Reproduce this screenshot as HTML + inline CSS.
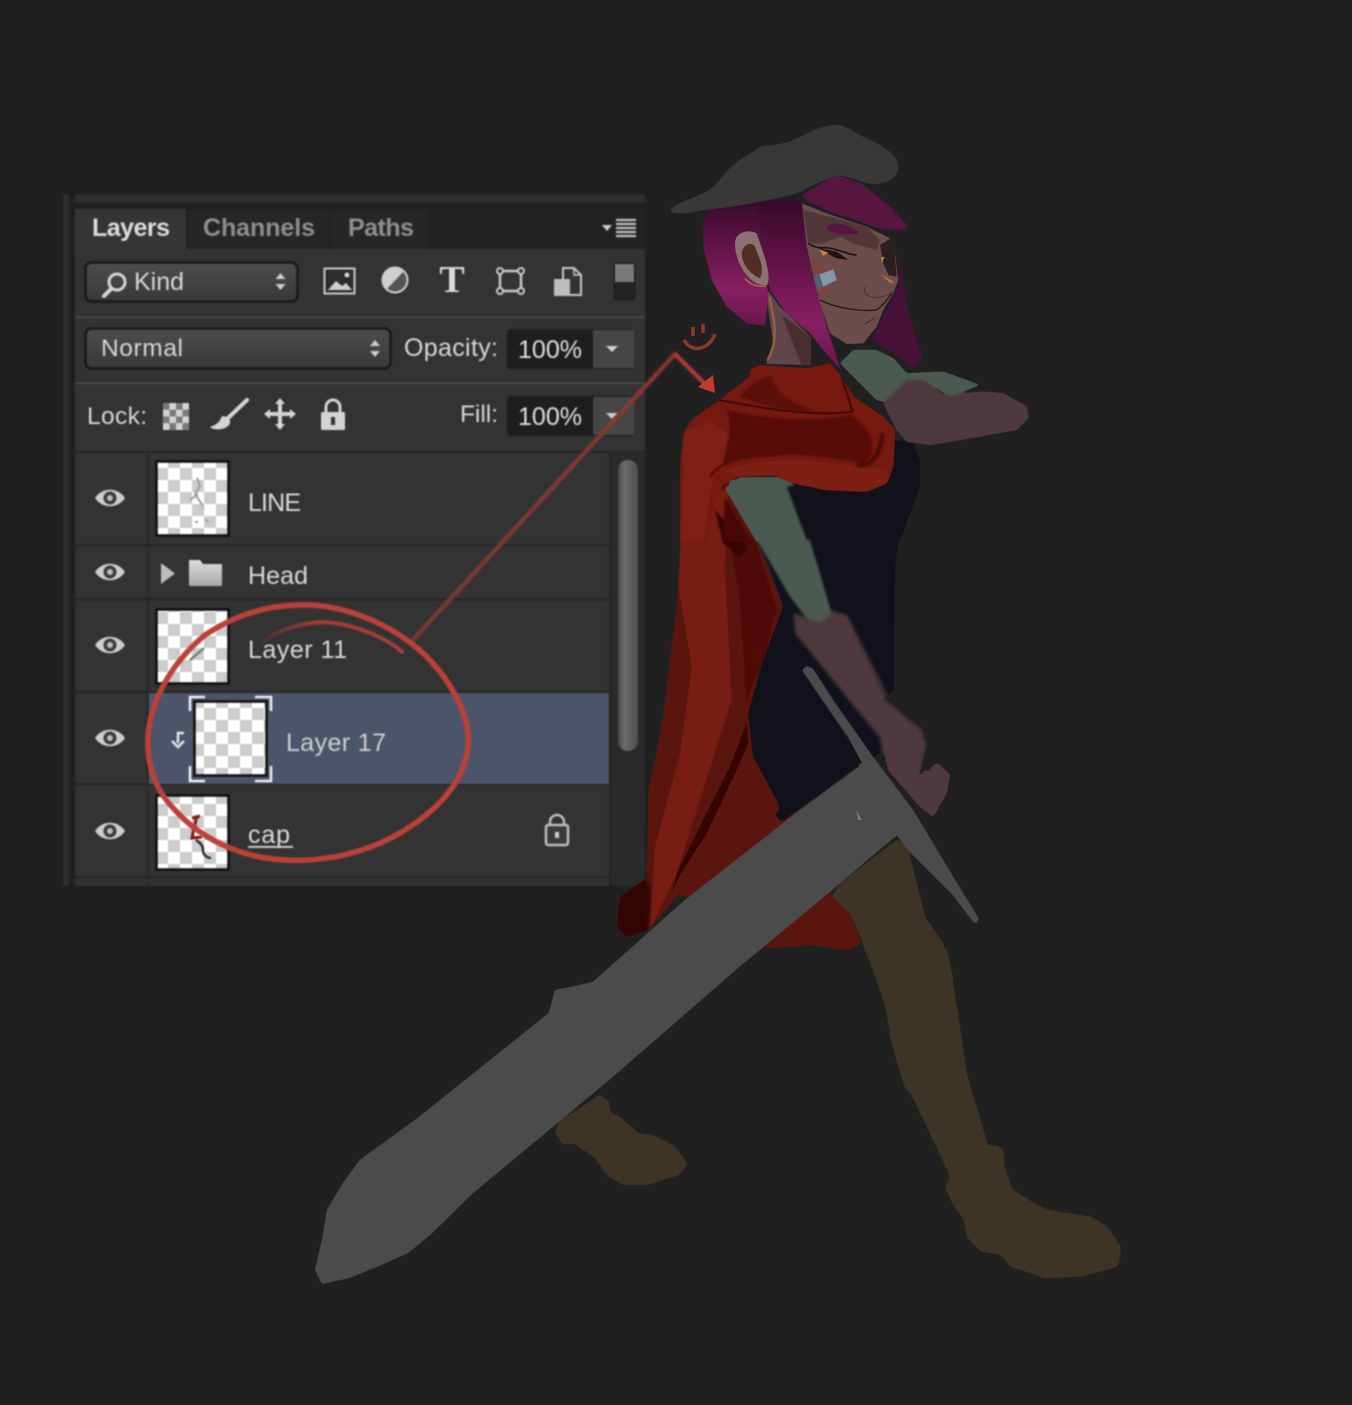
<!DOCTYPE html>
<html><head><meta charset="utf-8"><style>
html,body{margin:0;padding:0;background:#212020;width:1352px;height:1405px;overflow:hidden}
svg{display:block}
text{font-family:"Liberation Sans",sans-serif}
</style></head><body>
<svg width="1352" height="1405" viewBox="0 0 1352 1405" xmlns="http://www.w3.org/2000/svg">
<defs>
<pattern id="chk" width="24" height="24" patternUnits="userSpaceOnUse"><rect width="24" height="24" fill="#fff"/><rect width="12" height="12" fill="#ccc"/><rect x="12" y="12" width="12" height="12" fill="#ccc"/></pattern>
<linearGradient id="sel" x1="0" y1="0" x2="0" y2="1"><stop offset="0" stop-color="#4d4d4d"/><stop offset="1" stop-color="#383838"/></linearGradient>
<linearGradient id="sb" x1="0" y1="0" x2="1" y2="0"><stop offset="0" stop-color="#484848"/><stop offset=".3" stop-color="#6a6a6a"/><stop offset="1" stop-color="#505050"/></linearGradient>
<linearGradient id="hair" x1="0" y1="0" x2="0" y2="1"><stop offset="0" stop-color="#35092a"/><stop offset=".4" stop-color="#651349"/><stop offset=".72" stop-color="#861f62"/><stop offset="1" stop-color="#6a164c"/></linearGradient>
<linearGradient id="fo" x1="0" y1="0" x2="0" y2="1"><stop offset="0" stop-color="#dcdcdc"/><stop offset="1" stop-color="#a8a8a8"/></linearGradient>
<linearGradient id="line" gradientUnits="userSpaceOnUse" x1="410" y1="643" x2="675" y2="354"><stop offset="0" stop-color="#7e3a35"/><stop offset="1" stop-color="#93392f"/></linearGradient>
<linearGradient id="arc" gradientUnits="userSpaceOnUse" x1="262" y1="640" x2="402" y2="650"><stop offset="0" stop-color="#a83c34" stop-opacity=".15"/><stop offset=".4" stop-color="#a83c34"/><stop offset="1" stop-color="#a83c34"/></linearGradient>
<filter id="b" x="-2%" y="-2%" width="104%" height="104%" color-interpolation-filters="sRGB"><feGaussianBlur stdDeviation=".7"/></filter>
<filter id="b2" x="-20%" y="-20%" width="140%" height="140%" color-interpolation-filters="sRGB"><feGaussianBlur stdDeviation="3.500"/></filter>
<filter id="b3" x="-20%" y="-20%" width="140%" height="140%" color-interpolation-filters="sRGB"><feGaussianBlur stdDeviation="1.200"/></filter>
<filter id="s" x="-5%" y="-5%" width="110%" height="110%" color-interpolation-filters="sRGB"><feGaussianBlur stdDeviation="2.200"/><feComponentTransfer><feFuncA type="linear" slope="5" intercept="-2"/></feComponentTransfer></filter>
<filter id="s1" x="-5%" y="-5%" width="110%" height="110%" color-interpolation-filters="sRGB"><feGaussianBlur stdDeviation="1.200"/><feComponentTransfer><feFuncA type="linear" slope="4" intercept="-1.300"/></feComponentTransfer></filter>
</defs>
<rect width="1352" height="1405" fill="#212020"/>

<!-- PANEL -->
<g filter="url(#b)">
<rect x="63" y="194" width="6" height="692" fill="#2e2e2e"/>
<rect x="75" y="194" width="570" height="9" fill="#2f2f2f"/>
<rect x="75" y="208" width="570" height="678" fill="#333"/>
<rect x="75" y="208" width="570" height="41" fill="#222"/>
<rect x="75" y="209" width="111" height="41" fill="#353535"/>
<rect x="189" y="210" width="140" height="38" fill="#262626"/>
<rect x="332" y="210" width="96" height="38" fill="#262626"/>
<text x="92" y="236" font-size="25" font-weight="700" fill="#dcdcdc" textLength="78">Layers</text>
<text x="203" y="236" font-size="25" font-weight="700" fill="#8e8e8e" textLength="112">Channels</text>
<text x="348" y="236" font-size="25" font-weight="700" fill="#8e8e8e" textLength="66">Paths</text>
<path d="M602 225h10l-5 6z" fill="#cfcfcf"/>
<path d="M616 220h20M616 224h20M616 228h20M616 232h20M616 236h20" stroke="#c0c0c0" stroke-width="2.200"/>

<!-- row 1 -->
<rect x="85.500" y="262.500" width="212" height="39" rx="6" fill="url(#sel)" stroke="#191919" stroke-width="2.500"/>
<circle cx="117" cy="282" r="8" fill="none" stroke="#d5d5d5" stroke-width="3"/>
<path d="M111 289l-7 7" stroke="#d5d5d5" stroke-width="4" stroke-linecap="round"/>
<text x="134" y="290" font-size="25" fill="#d8d8d8" textLength="50">Kind</text>
<path d="M275.500 279l5-6 5 6zM275.500 284l5 6 5-6z" fill="#cdcdcd"/>
<rect x="324.500" y="268.500" width="30" height="25" fill="#2c2c2c" stroke="#c9c9c9" stroke-width="2"/>
<path d="M328 290l8-9 6 5 4-3 6 7z" fill="#cfcfcf"/><circle cx="347" cy="275" r="2.500" fill="#cfcfcf"/>
<circle cx="395" cy="280" r="13" fill="#cfcfcf"/><path d="M386 290a13 13 0 0 0 18-19z" fill="#555"/><circle cx="395" cy="280" r="12.500" fill="none" stroke="#cfcfcf" stroke-width="2"/>
<text x="452" y="292" text-anchor="middle" font-size="38" font-weight="700" fill="#dadada" style="font-family:'Liberation Serif',serif">T</text>
<rect x="500" y="271" width="21" height="20" fill="none" stroke="#c9c9c9" stroke-width="2.500"/>
<g fill="#333" stroke="#c9c9c9" stroke-width="2"><circle cx="500" cy="271" r="3"/><circle cx="521" cy="271" r="3"/><circle cx="500" cy="291" r="3"/><circle cx="521" cy="291" r="3"/></g>
<path d="M563 279v-11h11l7 7v20h-11" fill="none" stroke="#c9c9c9" stroke-width="2"/>
<path d="M574 268v7h7" fill="none" stroke="#c9c9c9" stroke-width="1.500"/>
<rect x="554" y="279" width="16" height="17" fill="#bdbdbd"/>
<rect x="614" y="263" width="21" height="37" rx="2" fill="#232323" stroke="#1d1d1d"/>
<rect x="615" y="264" width="19" height="18" fill="#7a7a7a"/>
<rect x="75" y="316" width="570" height="2" fill="#484848"/><rect x="75" y="315" width="570" height="1" fill="#292929"/>

<!-- row 2 -->
<rect x="85.500" y="328.500" width="305" height="40" rx="6" fill="url(#sel)" stroke="#191919" stroke-width="2.500"/>
<text x="101" y="356" font-size="24.500" fill="#d8d8d8" textLength="82">Normal</text>
<path d="M370 346l5-6 5 6zM370 351l5 6 5-6z" fill="#cdcdcd"/>
<text x="404" y="356" font-size="25" fill="#d8d8d8" textLength="94">Opacity:</text>
<rect x="507" y="329" width="127" height="40" rx="3" fill="#1e1e1e"/>
<rect x="593" y="330" width="41" height="38" rx="2" fill="#464646"/>
<text x="518" y="358" font-size="25" fill="#e0e0e0" textLength="64">100%</text>
<path d="M606 346h12l-6 6z" fill="#d0d0d0"/>
<rect x="75" y="382" width="570" height="2" fill="#484848"/><rect x="75" y="381" width="570" height="1" fill="#292929"/>

<!-- row 3 -->
<text x="87" y="424" font-size="24.500" fill="#d8d8d8" textLength="60">Lock:</text>
<rect x="163" y="403" width="26" height="27" fill="#d4d4d4"/>
<path d="M163 403h6.500v6.700h-6.500zM176 403h6.500v6.700h-6.500zM169.500 409.700h6.500v6.700h-6.500zM182.500 409.700h6.500v6.700h-6.500zM163 416.400h6.500v6.700h-6.500zM176 416.400h6.500v6.700h-6.500zM169.500 423h6.500v7h-6.500zM182.500 423h6.500v7h-6.500z" fill="#7a7a7a"/>
<path d="M247 400l-20 19" stroke="#d4d4d4" stroke-width="4" stroke-linecap="round"/>
<path d="M222 416c-2 6-6 9-12 11 4 4 15 3 19-2 2-3 1-6-1-8z" fill="#d4d4d4"/>
<path d="M280 398l5 6h-3v8h8v-3l6 5-6 5v-3h-8v8h3l-5 6-5-6h3v-8h-8v3l-6-5 6-5v3h8v-8h-3z" fill="#d4d4d4"/>
<path d="M326 413v-6a7 7 0 0 1 14 0v6" fill="none" stroke="#d4d4d4" stroke-width="3"/>
<rect x="321" y="412" width="24" height="18" rx="1.500" fill="#d4d4d4"/><rect x="331" y="417" width="4" height="8" fill="#333"/>
<text x="460" y="422" font-size="24.500" fill="#d8d8d8" textLength="38">Fill:</text>
<rect x="507" y="396" width="127" height="40" rx="3" fill="#1e1e1e"/>
<rect x="593" y="397" width="41" height="38" rx="2" fill="#464646"/>
<text x="518" y="425" font-size="25" fill="#e0e0e0" textLength="64">100%</text>
<path d="M606 413h12l-6 6z" fill="#d0d0d0"/>
<rect x="75" y="451" width="570" height="2" fill="#262626"/>

<!-- list -->
<rect x="609" y="453" width="36" height="433" fill="#2a2a2a"/>
<rect x="609" y="453" width="2" height="433" fill="#242424"/>
<rect x="618" y="460" width="20" height="291" rx="10" fill="url(#sb)"/>
<rect x="146.500" y="453" width="2" height="433" fill="#292929"/>
<g fill="#262626">
<rect x="75" y="544" width="534" height="2.500"/><rect x="75" y="598" width="534" height="2.500"/><rect x="75" y="691" width="534" height="2.500"/><rect x="75" y="783" width="534" height="2.500"/><rect x="75" y="876" width="534" height="2.500"/>
</g>
<rect x="149" y="693" width="460" height="91" fill="#4c546a"/>

<!-- eyes -->
<g transform="translate(110 498)"><path d="M-15 0C-8-11 8-11 15 0 8 11-8 11-15 0z" fill="#cdcdcd"/><circle r="6.500" fill="#3a3a3a"/><circle r="3" fill="#bdbdbd"/></g>
<g transform="translate(110 572)"><path d="M-15 0C-8-11 8-11 15 0 8 11-8 11-15 0z" fill="#cdcdcd"/><circle r="6.500" fill="#3a3a3a"/><circle r="3" fill="#bdbdbd"/></g>
<g transform="translate(110 645)"><path d="M-15 0C-8-11 8-11 15 0 8 11-8 11-15 0z" fill="#cdcdcd"/><circle r="6.500" fill="#3a3a3a"/><circle r="3" fill="#bdbdbd"/></g>
<g transform="translate(110 738)"><path d="M-15 0C-8-11 8-11 15 0 8 11-8 11-15 0z" fill="#cdcdcd"/><circle r="6.500" fill="#3a3a3a"/><circle r="3" fill="#bdbdbd"/></g>
<g transform="translate(110 831)"><path d="M-15 0C-8-11 8-11 15 0 8 11-8 11-15 0z" fill="#cdcdcd"/><circle r="6.500" fill="#3a3a3a"/><circle r="3" fill="#bdbdbd"/></g>

<!-- thumbs -->
<rect x="156.500" y="461.500" width="72" height="74" fill="url(#chk)" stroke="#0d0d0d" stroke-width="2.500"/>
<path d="M197 478l3 8-5 8 8 12M190 500l8-6M203 508l1 1M195 522h3M205 520l3 1" stroke="#9a9a9a" stroke-width="2" fill="none"/>
<rect x="156.500" y="609.500" width="72" height="74" fill="url(#chk)" stroke="#0d0d0d" stroke-width="2.500"/>
<path d="M190 660l14-12" stroke="#6a6a6a" stroke-width="2"/>
<rect x="194.500" y="701.500" width="72" height="74" fill="url(#chk)" stroke="#0d0d0d" stroke-width="2.500"/>
<path d="M190 711v-14h15M255 697h16v14M190 766v15h15M255 781h16v-15" fill="none" stroke="#f0f0f0" stroke-width="2.500"/>
<rect x="156.500" y="795.500" width="72" height="74" fill="url(#chk)" stroke="#0d0d0d" stroke-width="2.500"/>
<path d="M192 818l8-2M197 816c-2 8-4 16-5 22l10-1" stroke="#7a1c18" stroke-width="3" fill="none"/><path d="M196 840c5 3 7 6 7 10 0 5 4 8 8 8" stroke="#3a2a22" stroke-width="2.500" fill="none"/>

<path d="M161 563l14 10.500-14 10.500z" fill="#bcbcbc"/>
<path d="M189 564v-4h11l3 4h19v22h-33z" fill="url(#fo)"/>
<path d="M184 733h-6v10M172 741l6 6 6-6" fill="none" stroke="#e6e6e6" stroke-width="2.500"/>

<text x="248" y="511" font-size="25" fill="#dadada" textLength="53">LINE</text>
<text x="248" y="584" font-size="25" fill="#dadada" textLength="60">Head</text>
<text x="248" y="658" font-size="25" fill="#dadada" textLength="99">Layer 11</text>
<text x="286" y="751" font-size="25" fill="#cfcfcf" textLength="100">Layer 17</text>
<text x="248" y="843" font-size="25" fill="#dadada" textLength="42">cap</text>
<rect x="248" y="846" width="45" height="1.800" fill="#dadada"/>
<path d="M550 825v-3a7 7 0 0 1 14 0v3" fill="none" stroke="#bdbdbd" stroke-width="2.500"/>
<rect x="546" y="825" width="22" height="20" rx="2" fill="#3a3a3a" stroke="#bdbdbd" stroke-width="2.500"/><rect x="555" y="832" width="4" height="6" fill="#cfcfcf"/>
</g>

<!-- LOWER LEGS -->
<g filter="url(#s)">
<g transform="translate(300 900) scale(.542 .3333)">
<path d="M1035 120L1060 220 1080 320 1090 420 1115 560 1130 590 1200 830 1190 860 1205 915 1225 960 1230 1010 1255 1055 1295 1065 1310 1100 1360 1125 1370 1135 1440 1130 1510 1100 1515 1040 1490 980 1460 950 1380 930 1350 905 1315 870 1300 800 1298 750 1285 735 1270 740 1230 520 1215 350 1195 150z" fill="#3e3426"/>
<path d="M550 585L570 600 572 635 590 650 625 700 650 705 690 735 715 790 700 825 640 855 595 855 565 825 545 775 505 730 485 735 470 695 480 660 530 610z" fill="#3e3426"/>
</g>
</g>

<!-- CAPE -->
<g filter="url(#s)">
<g transform="translate(600 500) scale(.3333)">
<path d="M240-60L240 230 190 650 145 880 140 1135 60 1190 50 1280 80 1312 145 1290 240 1180 500 1345 640 1335 740 1352 785 1330 750 1240 695 1190 690 1000 530 900 460 770 445 640 490 480 550 320 470 120 385-60z" fill="#5a150f"/>
<path d="M140 1135L60 1190 50 1280 80 1312 145 1290 155 1180z" fill="#330502"/>
</g>
</g>
<g transform="translate(600 500) scale(.3333)">
<path d="M250-30L385-30 375 200 395 600 300 900 230 1120 150 1290 165 1040 240 760 275 500 235 260z" fill="#771d14" filter="url(#b3)"/>
<path d="M380 60L470 130 530 330 490 480 440 600 420 300z" fill="#4e0a06" filter="url(#b3)"/>
<path d="M345 30L440 140 420 170 370 130z" fill="#360300" filter="url(#b2)"/>
<path d="M440 670L390 800 300 980 235 1110 215 1175 240 1125 320 1000 410 810 445 730z" fill="#330400"/>
</g>

<!-- BODY / ARM / SLEEVE -->
<g filter="url(#s1)">
<g transform="translate(600 500) scale(.3333)">
<path d="M575-60L945-60 900 90 885 200 882 570 850 590 840 760 770 800 545 965 525 945 540 925 530 900 460 770 445 640 490 480 550 320 510 200 470 120z" fill="#10111b"/>
<path d="M585 345L625 360 690 335 740 350 855 580 850 600 960 690 975 730 955 810 850 750 845 715 590 400z" fill="#2f2929" stroke="#2f2929" stroke-width="14" stroke-linejoin="round"/>
<path d="M585 345L625 360 690 335 740 350 855 590 850 600 960 690 975 730 955 835 975 810 985 815 1000 795 1015 790 1050 825 1040 880 1000 950 965 925 950 910 865 810 850 750 845 715 590 400z" fill="#4f393e"/>
<path d="M385-60L575-60 660 220 695 340 660 368 620 355 570 290 460 100z" fill="#4a5a50"/>
</g>
<g transform="translate(660 360) scale(.3333)">
<path d="M380 380L560 360 700 240 760 250 780 300 780 380 720 540 420 540z" fill="#10111b"/>
<path d="M195 385L240 352 370 352 442 545 290 545z" fill="#4a5a50"/>
</g>
<g transform="translate(600 500) scale(.3333)">
<path d="M695 1190L720 1150 890 1020 920 1030 940 1110 975 1250 1030 1330 1060 1440 830 1440 790 1330 750 1240z" fill="#3e3426"/>
</g>
</g>

<!-- SWORD -->
<g filter="url(#s1)">
<path d="M802 670L807 666 813 669 833 700 873 757 913 810 955 880 979 919 975 924 953 895 908 850 897 835 820 900 739 967 609 1080 473 1193 430 1235 408 1253 381 1265 349 1278 322 1284 315 1270 322 1240 327 1210 343 1183 360 1160 419 1117 549 1013 555 990 571 987 593 982 685 900 800 810 860 766 843 730z" fill="#4b4b4b"/>
</g>
<path d="M843 728L862 763 857 765z" fill="#10111b"/>
<path d="M856 810L862 820 858 820z" fill="#777"/>

<!-- UPPER -->
<g filter="url(#s1)"><g transform="translate(650 110) scale(.3333)">
<path d="M740 380L750 520 690 640 665 690 720 720 790 775 815 745 800 690 770 590 755 480z" fill="#471139"/>
<path d="M700 880L770 810 820 810 880 855 1000 845 1060 850 1130 890 1135 925 1100 960 960 985 840 1005 770 995 740 960z" fill="#4f393e"/>
<path d="M570 760L610 720 680 720 730 745 770 790 880 785 990 825 900 860 870 840 820 810 770 810 700 875 680 870 630 820z" fill="#4a5a50"/>
</g></g>

<!-- neck + face -->
<g transform="translate(680 210) scale(.3333)">
<path d="M255 230L265 300 280 400 258 462 392 465 392 380 300 290z" fill="#60454a"/>
<path d="M305 315L392 380 392 465 365 465z" fill="#482f2e" filter="url(#b3)"/>
<path d="M268 260C280 320 300 380 262 452" fill="none" stroke="#a8703f" stroke-width="5" filter="url(#b3)"/>
<path d="M365-20L440 10 560 50 640 90 655 210 640 250 610 300 590 350 550 400 500 402 450 370 410 250 380 110z" fill="#6c4d4c"/>
<path d="M370 0L560 50 600 90 590 120 520 100 480 80 430 100 385 100z" fill="#503639" filter="url(#b3)"/>
<path d="M395 150C440 160 465 210 440 260 420 260 410 240 400 190z" fill="#7d4440" filter="url(#b2)"/>
<path d="M600 105L640 80 650 200 625 195 610 160z" fill="#2e1e22"/>
<path d="M600 190L645 218 630 218z" fill="#c5773d" filter="url(#b3)"/>
<path d="M603 142L614 140 606 158z" fill="#c98236"/>
<path d="M385 100C400 112 420 115 440 113 480 118 505 135 530 135" fill="none" stroke="#20141a" stroke-width="5"/>
<path d="M415 115L470 125 505 150 470 145z" fill="#1f1215"/>
<path d="M418 118L445 128 430 138z" fill="#c98236"/>
<path d="M440 52C450 35 510 35 537 72 490 75 445 70 440 52z" fill="#581541"/>
<path d="M400 200L460 178 470 210 415 238z" fill="#8297a8"/><path d="M400 200L418 193 430 232 415 238z" fill="#4f6274"/>
<path d="M420 270C470 295 540 305 590 300 610 285 625 265 635 250" fill="none" stroke="#2a181e" stroke-width="4"/>
<path d="M560 225C545 245 555 262 590 262 610 262 625 255 640 245" fill="none" stroke="#4a3030" stroke-width="3"/>
<path d="M555 342L582 325" stroke="#3a2527" stroke-width="3"/>
</g>

<g filter="url(#s1)"><g transform="translate(650 110) scale(.3333)">
<path d="M455 255L560 195 640 225 720 290 775 350 750 360 690 355 620 330 540 305 470 270z" fill="#581541"/>
</g></g>
<g transform="translate(680 210) scale(.3333)">
<path d="M90-40L70 50 70 110 95 210 140 290 200 340 255 347 265 260 250 130 240-30z" fill="url(#hair)"/>
<path d="M230-30L365-30 380 110 410 240 440 350 482 478 430 420 390 370 320 310 270 240 250 150z" fill="url(#hair)"/>
<path d="M165 100C165 70 200 55 230 70 250 130 275 190 262 225 220 235 165 170 165 100z" fill="#8b7272"/>
<path d="M185 130C190 100 215 95 225 110 235 140 255 170 240 205 215 195 185 165 185 130z" fill="#4f2e24"/>
<path d="M195 205C210 225 235 232 258 228" fill="none" stroke="#b3763e" stroke-width="4"/>
</g>
<g filter="url(#s1)"><g transform="translate(650 110) scale(.3333)">
<path d="M60 300C70 285 130 265 170 245 200 230 220 190 250 165 280 140 310 130 330 110 360 105 400 105 430 90 470 75 510 45 560 45 590 45 620 75 660 90 700 110 740 130 745 170 745 200 720 215 690 220 650 228 620 205 570 195 530 205 490 225 440 250 360 270 260 290 160 300 120 310 60 315 60 300z" fill="#383838"/>
</g></g>

<!-- scarf -->
<g filter="url(#s1)"><g transform="translate(660 360) scale(.3333)">
<path d="M270 30L300 15 330 18 440 25 510 10 545 50 580 110 670 170 705 210 700 320 680 370 620 395 500 390 400 370 340 345 240 350 190 370 170 400 140 545 60 545 62 300 75 210 100 175 180 120 270 50z" fill="#76190f"/>
</g></g>
<g transform="translate(660 360) scale(.3333)">
<path d="M70 220L150 180 220 230 210 300 160 350 130 545 65 545z" fill="#7f2016" filter="url(#b2)"/>
<path d="M200 150C300 175 450 190 570 165 650 210 650 290 610 310 500 290 340 265 200 310 170 320 230 220 200 150z" fill="#570c07" filter="url(#b2)"/>
<path d="M190 335C280 285 480 300 590 320 650 325 690 330 690 345L680 370 620 395 500 390 400 370 340 345 240 350z" fill="#7d1f13" filter="url(#b3)"/>
<path d="M335 50C345 100 400 135 460 150 400 160 300 135 240 110 260 80 300 50 335 50z" fill="#520d08" filter="url(#b2)" opacity=".75"/>
<path d="M175 120C240 130 440 175 578 155L545 50" fill="none" stroke="#320907" stroke-width="5" filter="url(#b3)"/>
<path d="M590 315C640 320 660 280 668 220" fill="none" stroke="#4a0b06" stroke-width="14" filter="url(#b2)"/>
<path d="M150 350C190 295 260 285 350 285" fill="none" stroke="#560f08" stroke-width="8" filter="url(#b3)"/>
<path d="M195 410L190 545 275 545z" fill="#470805" filter="url(#b2)"/>
</g>

<!-- ANNOTATIONS -->
<path d="M410 643L675 354 705 384" fill="none" stroke="url(#line)" stroke-width="4" filter="url(#b3)"/>
<path d="M675 354L705 384" fill="none" stroke="#a33a2f" stroke-width="3.500"/>
<path d="M713 375L698 387 715 393z" fill="#c43a2c"/>
<path d="M684 340C690 352 708 352 715 334" fill="none" stroke="#8a3a2c" stroke-width="3.500"/>
<path d="M693 327v9M703 324v9" stroke="#8a3a2c" stroke-width="3.500"/>
<g fill="none" stroke="#bb4138" stroke-width="5.500" stroke-linecap="round" filter="url(#b)">
<path d="M297 605C340 603 390 622 425 655 460 690 470 725 468 745 465 780 440 808 405 830 365 855 320 862 285 860 240 858 200 838 175 810 150 785 147 755 148 735 152 695 175 660 205 635 235 615 265 606 297 605z"/>
<path d="M262 642C285 625 320 618 345 625 375 632 395 645 402 652" stroke-width="4" stroke="url(#arc)"/>
</g>
</svg>
</body></html>
